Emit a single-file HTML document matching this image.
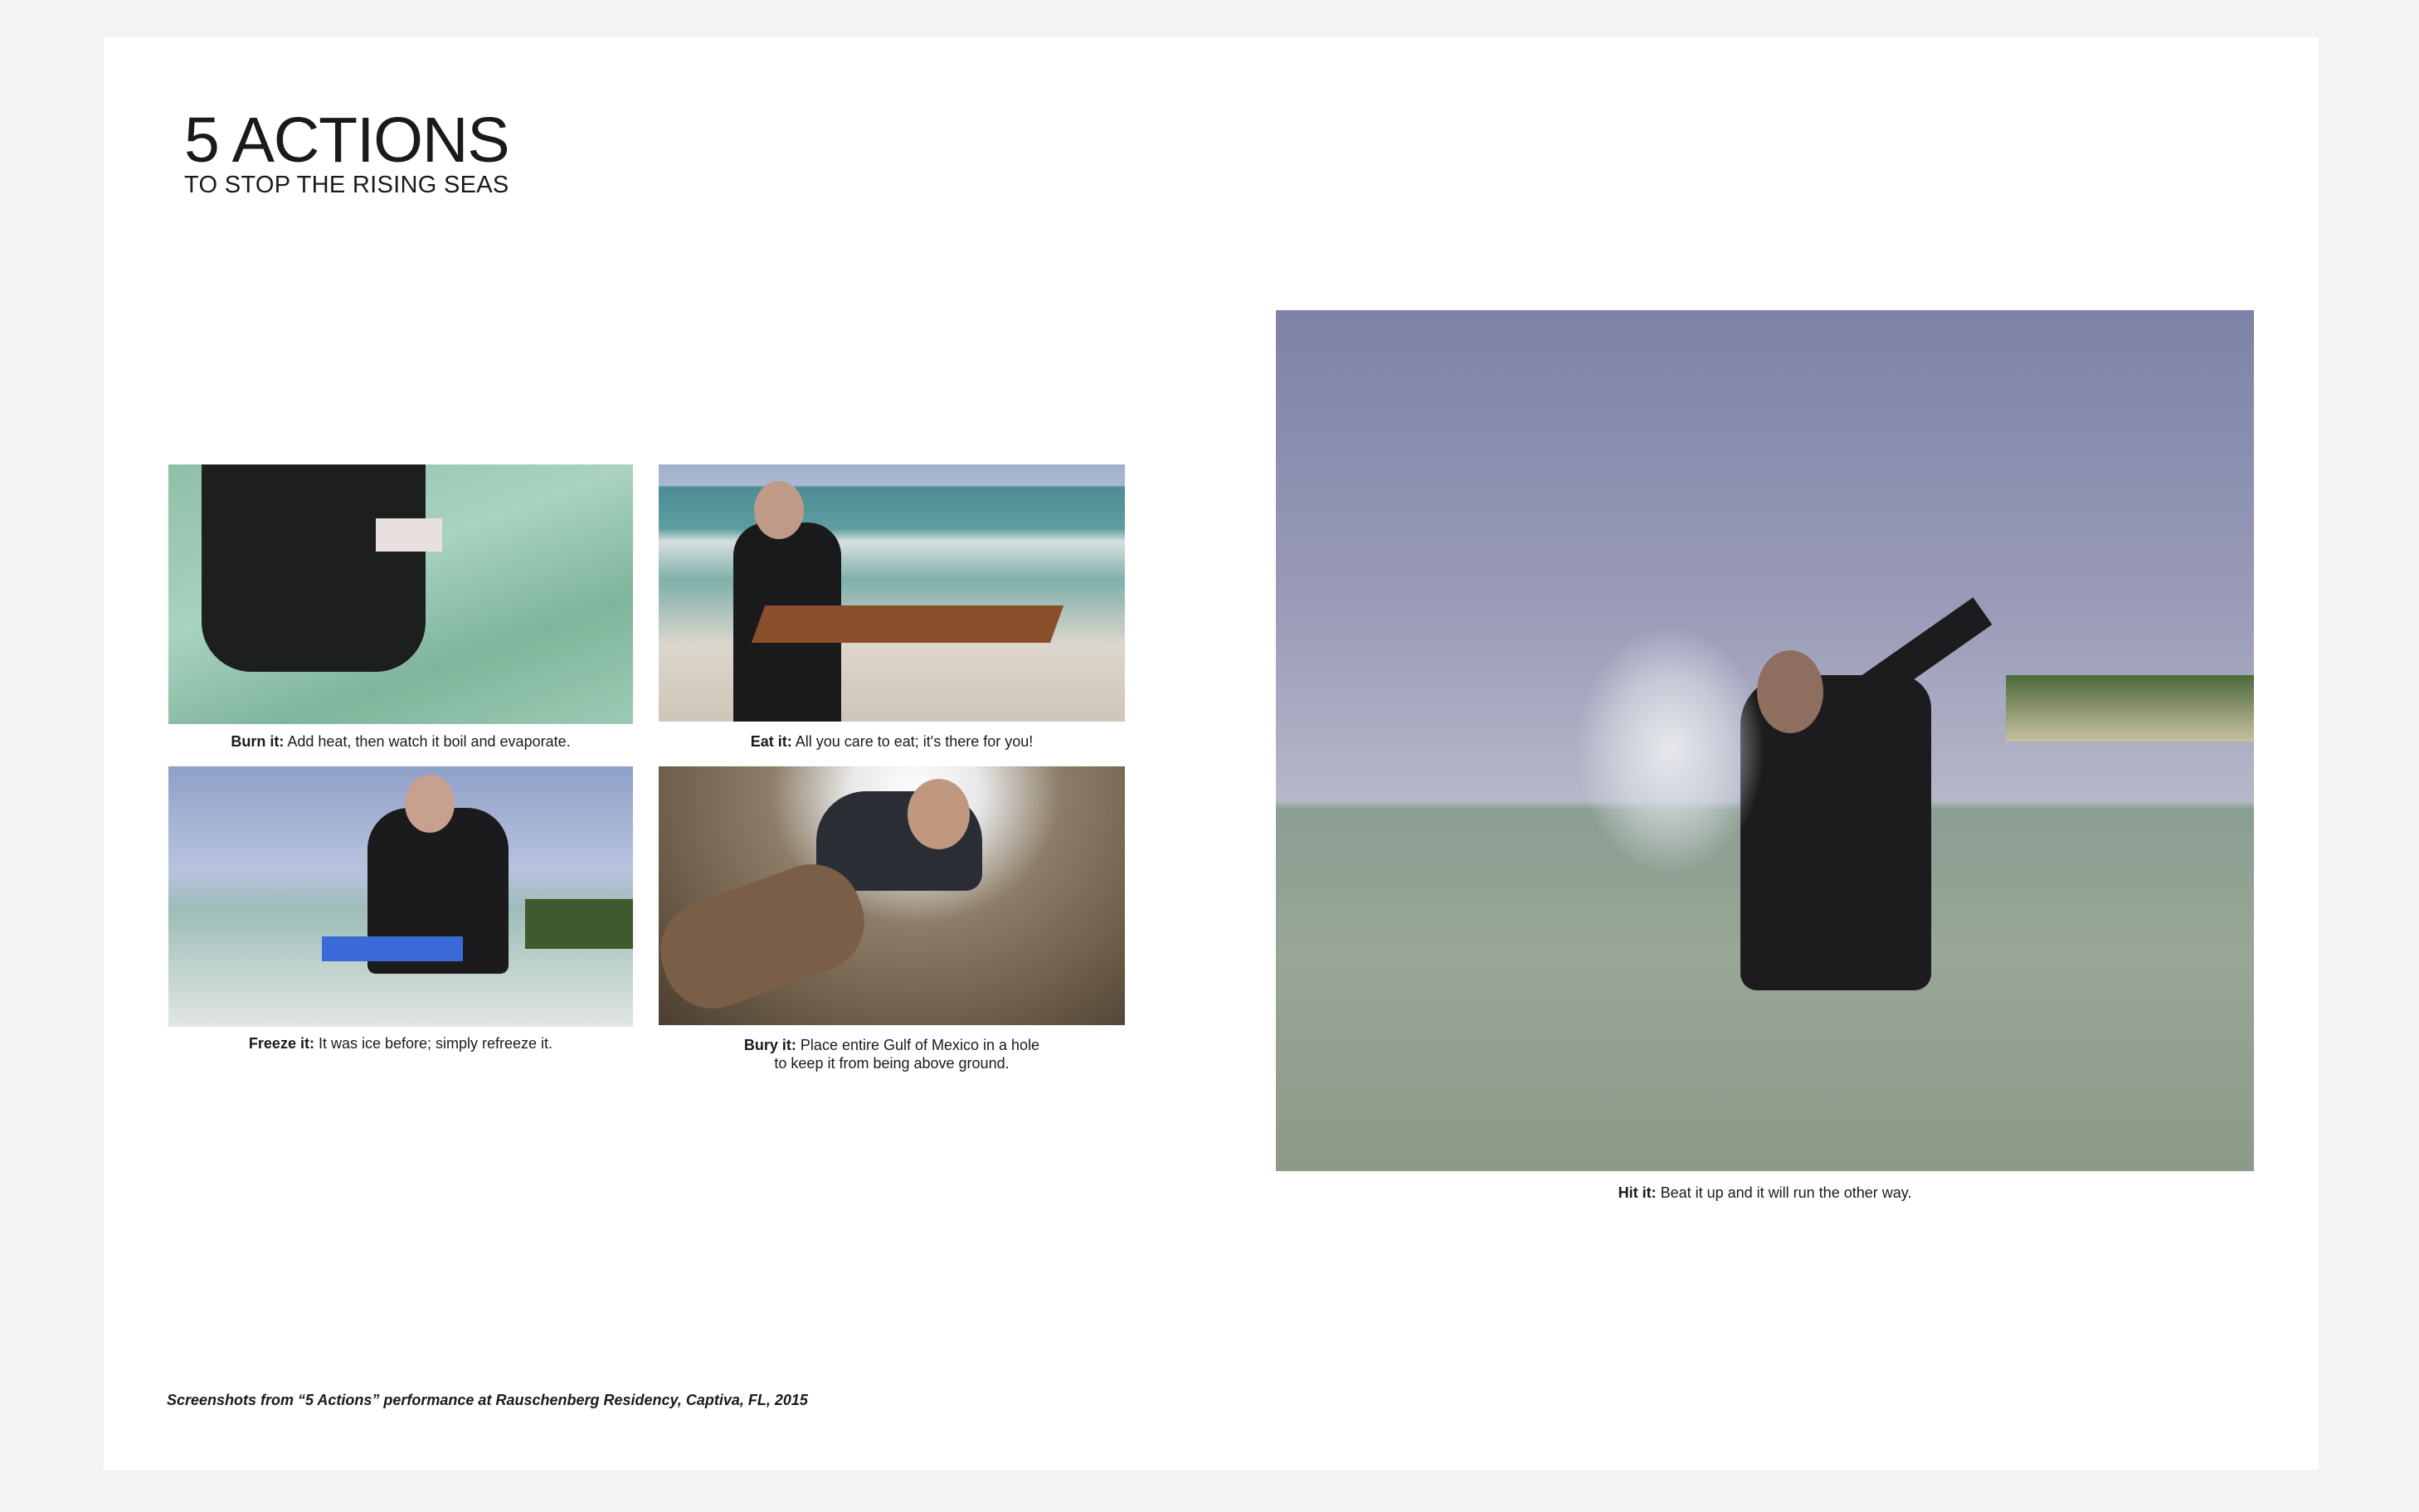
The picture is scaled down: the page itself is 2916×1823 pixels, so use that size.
<!DOCTYPE html>
<html><head><meta charset="utf-8"><style>
*{margin:0;padding:0;box-sizing:border-box}
body{width:2916px;height:1823px;background:#f3f3f3;position:relative;overflow:hidden;font-family:"Liberation Sans",sans-serif;color:#1a1a1a}
.page{position:absolute;left:125px;top:45px;width:2670px;height:1727px;background:#fff}
.abs{position:absolute}
.img{position:absolute;overflow:hidden}
.cap{position:absolute;font-size:18px;text-align:center;line-height:22px}
.cap b{font-weight:bold}
</style></head><body>
<div class="page"></div>
<div class="abs" style="left:222px;top:131px;font-size:77px;letter-spacing:-1.2px;line-height:77px">5 ACTIONS</div>
<div class="abs" style="left:222px;top:207px;font-size:29px;line-height:32px;letter-spacing:0.3px">TO STOP THE RISING SEAS</div>

<div class="img" style="left:203px;top:560px;width:560px;height:313px;background:linear-gradient(160deg,#8fbfa8 0%,#a9d3bf 40%,#7fb59c 70%,#9ccbb4 100%)">
 <div class="abs" style="left:40px;top:0;width:270px;height:250px;background:#1c1f1e;border-radius:0 0 60px 60px"></div>
 <div class="abs" style="left:250px;top:65px;width:80px;height:40px;background:#e8e0de"></div>
</div>
<div class="cap" style="left:203px;top:883px;width:560px"><b>Burn it:</b> Add heat, then watch it boil and evaporate.</div>

<div class="img" style="left:794px;top:560px;width:562px;height:310px;background:linear-gradient(180deg,#9fb0cc 0%,#aab9d2 8%,#4d8c94 9%,#5e9ea0 25%,#d8e0e0 30%,#7fb0aa 45%,#dcd6cc 70%,#cfc6b8 100%)">
 <div class="abs" style="left:90px;top:70px;width:130px;height:240px;background:#1a1a1c;border-radius:40px 40px 0 0"></div>
 <div class="abs" style="left:115px;top:20px;width:60px;height:70px;background:#c09a88;border-radius:50%"></div>
 <div class="abs" style="left:120px;top:170px;width:360px;height:45px;background:#8a4e2c;transform:skewX(-20deg)"></div>
</div>
<div class="cap" style="left:794px;top:883px;width:562px"><b>Eat it:</b> All you care to eat; it's there for you!</div>

<div class="img" style="left:203px;top:924px;width:560px;height:314px;background:linear-gradient(180deg,#8fa0c8 0%,#b8c3de 40%,#9dbcb8 55%,#bcd0cc 75%,#e0e6e4 100%)">
 <div class="abs" style="left:240px;top:50px;width:170px;height:200px;background:#1b1b1d;border-radius:50px 50px 10px 10px"></div>
 <div class="abs" style="left:285px;top:10px;width:60px;height:70px;background:#c8a090;border-radius:50%"></div>
 <div class="abs" style="left:185px;top:205px;width:170px;height:30px;background:#3a6ad8"></div>
 <div class="abs" style="left:430px;top:160px;width:130px;height:60px;background:#3f5a2c"></div>
</div>
<div class="cap" style="left:203px;top:1247px;width:560px"><b>Freeze it:</b> It was ice before; simply refreeze it.</div>

<div class="img" style="left:794px;top:924px;width:562px;height:312px;background:radial-gradient(ellipse at 55% 10%,#ffffff 0%,#e8e8e8 18%,#8d7d68 40%,#6e5e4a 70%,#4a3e30 100%)">
 <div class="abs" style="left:190px;top:30px;width:200px;height:120px;background:#2a2e34;border-radius:60px 60px 20px 20px"></div>
 <div class="abs" style="left:300px;top:15px;width:75px;height:85px;background:#c09880;border-radius:50%"></div>
 <div class="abs" style="left:0;top:140px;width:250px;height:130px;background:#7a5e48;border-radius:60px;transform:rotate(-20deg)"></div>
</div>
<div class="cap" style="left:794px;top:1249px;width:562px"><b>Bury it:</b> Place entire Gulf of Mexico in a hole<br>to keep it from being above ground.</div>

<div class="img" style="left:1538px;top:374px;width:1179px;height:1038px;background:linear-gradient(180deg,#7e82a6 0%,#9a9cb8 35%,#b4b8c8 57%,#8a9e92 58%,#98a696 75%,#8e9a88 100%)">
 <div class="abs" style="left:880px;top:440px;width:299px;height:80px;background:linear-gradient(180deg,#4c6a3a,#c8c0a0)"></div>
 <div class="abs" style="left:560px;top:440px;width:230px;height:380px;background:#1c1c1e;border-radius:60px 40px 20px 20px"></div>
 <div class="abs" style="left:580px;top:410px;width:80px;height:100px;background:#8e6e5e;border-radius:50%"></div>
 <div class="abs" style="left:750px;top:320px;width:40px;height:200px;background:#1c1c1e;transform:rotate(55deg)"></div>
 <div class="abs" style="left:360px;top:380px;width:230px;height:300px;background:radial-gradient(ellipse,#e6e8ec 0%,rgba(220,224,230,.6) 40%,rgba(200,205,210,0) 70%)"></div>
</div>
<div class="cap" style="left:1538px;top:1427px;width:1179px"><b>Hit it:</b> Beat it up and it will run the other way.</div>

<div class="abs" style="left:201px;top:1678px;font-size:18px;font-style:italic;font-weight:bold">Screenshots from “5 Actions” performance at Rauschenberg Residency, Captiva, FL, 2015</div>
</body></html>
